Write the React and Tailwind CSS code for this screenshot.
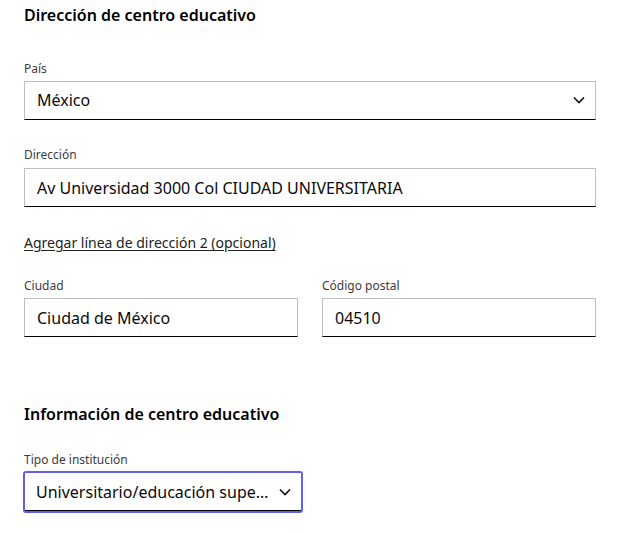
import React from "react";

const Chevron = () => (
  <svg width="14" height="14" viewBox="0 0 14 14" fill="none" className="shrink-0">
    <path d="M2 4.5L7 9.5L12 4.5" stroke="#111" strokeWidth="1.6" />
  </svg>
);

const Label = ({ children, className = "" }) => (
  <div className={`text-xs leading-4 text-[#3c3c3c] mb-1 ${className}`}>{children}</div>
);

const TextBox = ({ value, className = "" }) => (
  <div
    className={`h-[39px] flex items-center px-3 border border-[#bfbfbf] border-b-black bg-white text-base text-[#0a0a0a] ${className}`}
  >
    {value}
  </div>
);

const App = () => {
  return (
    <div className="min-h-screen bg-white px-6 pt-[3px]" style={{ fontFamily: '"Noto Sans", sans-serif' }}>
      <div className="w-[572px]">
        <h2 className="text-base leading-6 font-semibold text-black">Dirección de centro educativo</h2>

        <div className="mt-[34px]">
          <Label>País</Label>
          <div className="h-[39px] flex items-center justify-between pl-3 pr-[9px] pb-px border border-[#bfbfbf] border-b-black bg-white text-base text-[#0a0a0a]">
            <span>México</span>
            <Chevron />
          </div>
        </div>

        <div className="mt-[27px]">
          <Label className="mb-[5px]">Dirección</Label>
          <TextBox value="Av Universidad 3000 Col CIUDAD UNIVERSITARIA" />
        </div>

        <div className="mt-[23px]">
          <a href="#" className="text-sm leading-5 text-[#222] underline underline-offset-2">
            Agregar línea de dirección 2 (opcional)
          </a>
        </div>

        <div className="mt-[24px] grid grid-cols-2 gap-6">
          <div>
            <Label>Ciudad</Label>
            <TextBox value="Ciudad de México" />
          </div>
          <div>
            <Label>Código postal</Label>
            <TextBox value="04510" />
          </div>
        </div>

        <h2 className="mt-[65px] text-base leading-6 font-semibold text-black">Información de centro educativo</h2>

        <div className="mt-[26px]">
          <Label className="mb-[3px]">Tipo de institución</Label>
          <div className="w-[280px] rounded-[3px] border-2 border-[#5f5ff0] -ml-px">
            <div className="h-[38px] flex items-center justify-between pl-[11px] pr-[9px] bg-white border-b border-black text-base text-[#0a0a0a]">
              <span className="truncate">Universitario/educación superior</span>
              <span className="ml-2"><Chevron /></span>
            </div>
          </div>
        </div>
      </div>
    </div>
  );
};

export default App;
